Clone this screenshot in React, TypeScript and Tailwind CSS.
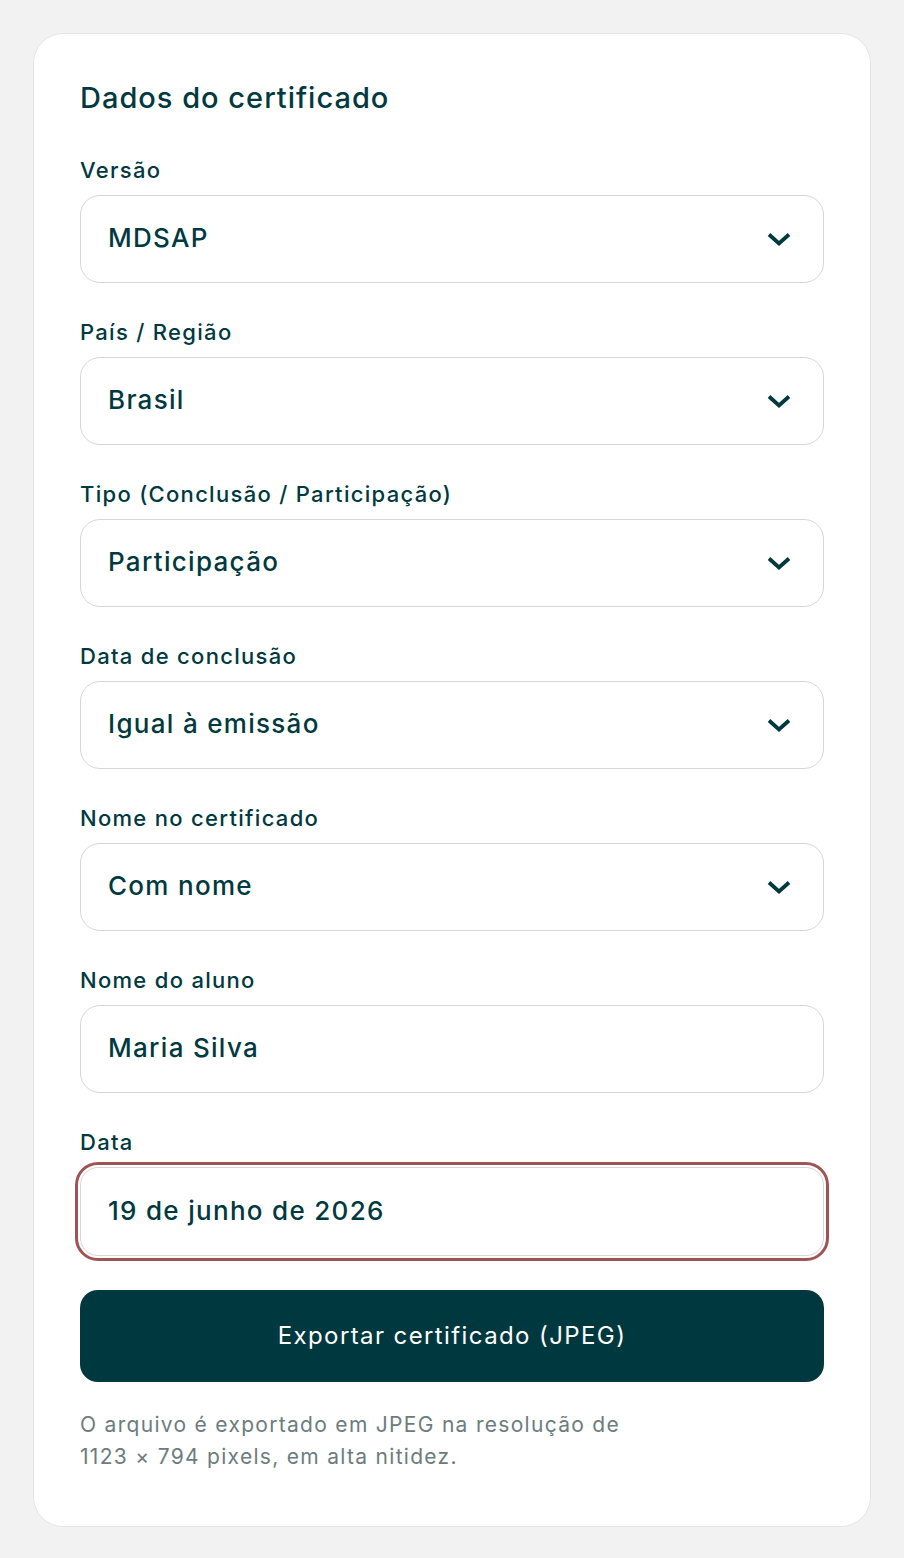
import React, { useState } from 'react';

const Chevron = () => (
  <svg width="26" height="18" viewBox="0 0 26 18" fill="none" className="shrink-0">
    <path d="M3 4.5 L13 13.5 L23 4.5" stroke="#00393f" strokeWidth="3.8" strokeLinejoin="miter" strokeLinecap="butt" />
  </svg>
);

const fields = [
  { label: 'Versão', value: 'MDSAP', select: true },
  { label: 'País / Região', value: 'Brasil', select: true },
  { label: 'Tipo (Conclusão / Participação)', value: 'Participação', select: true },
  { label: 'Data de conclusão', value: 'Igual à emissão', select: true },
  { label: 'Nome no certificado', value: 'Com nome', select: true },
  { label: 'Nome do aluno', value: 'Maria Silva', select: false },
];

const App = () => {
  const [date, setDate] = useState('19 de junho de 2026');

  return (
    <div className="min-h-screen bg-[#f2f2f2] px-[33px] pt-[33px] pb-8 font-['Inter','Open_Sans',sans-serif] text-[#00393f]">
      <div className="bg-white border border-[#e6e6e6] rounded-[30px] px-[46px] pt-[46px] pb-[53px]">
        <h2 className="text-[29px] leading-[36px] font-medium tracking-[1px] mb-[41px]">Dados do certificado</h2>

        <div className="flex flex-col gap-[36px]">
          {fields.map((f) => (
            <div key={f.label} className="flex flex-col gap-[12px]">
              <label className="text-[22px] leading-[26px] font-medium tracking-[1.3px]">{f.label}</label>
              <div className="h-[88px] border border-[#d6d6d6] rounded-[20px] flex items-center justify-between pl-[27px] pr-[31px]">
                <span className="text-[26px] leading-[32px] pb-[3px] font-medium tracking-[1.3px]">{f.value}</span>
                {f.select && <Chevron />}
              </div>
            </div>
          ))}

          <div className="flex flex-col gap-[12px]">
            <label className="text-[22px] leading-[26px] font-medium tracking-[1.3px]">Data</label>
            <input
              value={date}
              onChange={(e) => setDate(e.target.value)}
              className="h-[89px] border border-[#d6d6d6] rounded-[18px] pl-[27px] pb-[3px] text-[26px] font-medium tracking-[1.3px] text-[#00393f] outline-[3px] outline-solid outline-offset-[2px] outline-[#a15254]"
            />
          </div>
        </div>

        <button
          type="button"
          className="mt-[34px] w-full h-[92px] rounded-[18px] bg-[#003840] text-white text-[24px] font-normal tracking-[1.4px]"
        >
          Exportar certificado (JPEG)
        </button>

        <p className="mt-[27px] text-[21px] leading-[32px] text-[#6c7c7e] tracking-[1.3px]">
          O arquivo é exportado em JPEG na resolução de
          <br />
          1123 × 794 pixels, em alta nitidez.
        </p>
      </div>
    </div>
  );
};

export default App;
